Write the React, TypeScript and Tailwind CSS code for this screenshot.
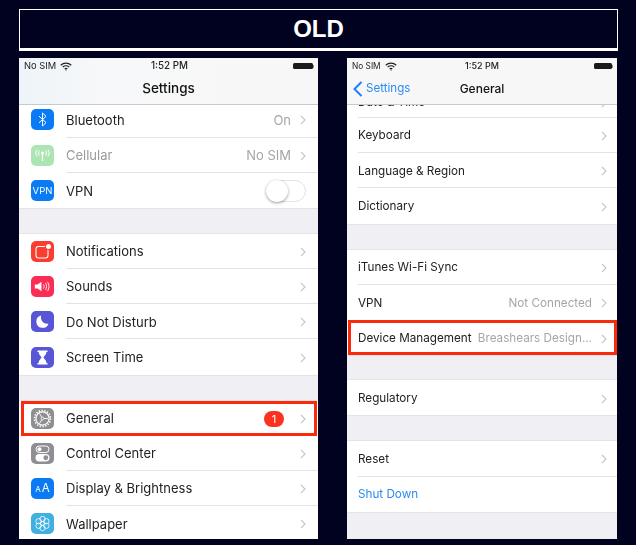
import type { ReactNode } from 'react';

const sans = { fontFamily: 'Inter, "Liberation Sans", sans-serif' };

function Chevron() {
  return (
    <svg width="6" height="10" viewBox="0 0 6 10" className="shrink-0" fill="none">
      <path d="M1 .8 5 5 1 9.2" stroke="#c4c4c8" strokeWidth="1.1" />
    </svg>
  );
}

function Wifi() {
  return (
    <svg width="12" height="9" viewBox="0 0 13 9" fill="none" stroke="#222">
      <path d="M.8 3.2C4 .2 9 .2 12.2 3.2" strokeWidth="1.3" />
      <path d="M2.9 5.2c2-1.8 5.2-1.800 7.200 0" strokeWidth="1.3" />
      <path d="M5 7.100c.9-.7 2.100-.7 3 0" strokeWidth="1.3" />
      <circle cx="6.500" cy="8.200" r=".7" fill="#222" stroke="none" />
    </svg>
  );
}

function StatusBar({ compact }: { compact?: boolean }) {
  return (
    <div className="relative flex items-center justify-between h-[15px] pt-[1px] text-[#222]">
      <div className={`flex items-center gap-[4px] pl-[5px] ${compact ? 'text-[8.300px]' : 'text-[9.300px]'}`}>
        <span>No SIM</span>
        <Wifi />
      </div>
      <span className={`absolute inset-x-0 text-center font-medium ${compact ? 'text-[9px]' : 'text-[9.800px] pl-[2px]'}`}>1:52 PM</span>
      <div className="flex items-center pr-[4px]">
        <div className={`${compact ? 'w-[18px]' : 'w-[20px]'} h-[6.500px] rounded-[1.500px] bg-[#1a1a1a]`} />
        <div className="w-[1px] h-[3px] bg-[#888]" />
      </div>
    </div>
  );
}

function IconBox({ bg, children }: { bg: string; children: ReactNode }) {
  return (
    <div className={`${bg} w-[23px] h-[21px] rounded-[5px] shrink-0 flex items-center justify-center overflow-hidden`}>
      {children}
    </div>
  );
}

const icons: Record<string, ReactNode> = {
  bluetooth: (
    <IconBox bg="bg-[#0a7bf5]">
      <svg width="9" height="15" viewBox="0 0 9 15" fill="none" stroke="#fff" strokeWidth="1">
        <path d="M1 4.200 8 10.600 4.500 14V1L8 4.400 1 10.800" />
      </svg>
    </IconBox>
  ),
  cellular: (
    <IconBox bg="bg-[#ace5b3]">
      <svg width="17" height="13" viewBox="0 0 17 13" fill="none" stroke="#fff" strokeWidth="1">
        <circle cx="8.500" cy="4" r="1.500" fill="#fff" stroke="none" />
        <path d="M8.500 5v7" strokeWidth="1.200" />
        <path d="M5.500 1.500c-1.200 1.400-1.200 3.600 0 5M11.500 1.500c1.200 1.400 1.200 3.600 0 5M3.200.5c-1.800 2-1.800 5 0 7M13.800.5c1.800 2 1.800 5 0 7" />
      </svg>
    </IconBox>
  ),
  vpn: (
    <IconBox bg="bg-[#0a7bf5]">
      <span className="text-[9.500px] leading-none text-white">VPN</span>
    </IconBox>
  ),
  notifications: (
    <IconBox bg="bg-[#fb3c30]">
      <svg width="21" height="19" viewBox="0 0 21 19" fill="none">
        <rect x="4" y="4.500" width="12" height="11.500" rx="2.500" stroke="#fff" strokeWidth="1.100" />
        <circle cx="16.500" cy="4.500" r="3.500" fill="#fb3c30" />
        <circle cx="16.500" cy="4.500" r="2.500" fill="#fff" />
      </svg>
    </IconBox>
  ),
  sounds: (
    <IconBox bg="bg-[#fb2d55]">
      <svg width="17" height="11" viewBox="0 0 17 11" fill="none">
        <path d="M.8 3.500h2.700L7.500.8v9.400L3.500 7.500H.8z" fill="#fff" />
        <path d="M9.500 3.500c.8 1.200.8 2.800 0 4M11.500 2c1.400 2 1.400 5 0 7M13.500.8c2 2.800 2 6.600 0 9.400" stroke="#fff" strokeWidth=".9" />
      </svg>
    </IconBox>
  ),
  dnd: (
    <IconBox bg="bg-[#5856d6]">
      <svg width="13" height="13" viewBox="0 0 13 13">
        <path d="M5.200.6A6.200 6.200 0 1 0 12.500 8.400C8.500 9.600 3.900 6 5.200.6z" fill="#fff" />
      </svg>
    </IconBox>
  ),
  screenTime: (
    <IconBox bg="bg-[#5856d6]">
      <svg width="11" height="15" viewBox="0 0 11 15">
        <path d="M.5.500h10v1.600H9.400C9.400 5 7 6 6.500 7.500 7 9 9.400 10 9.400 12.900h1.100v1.600H.5v-1.600h1.100C1.600 10 4 9 4.500 7.500 4 6 1.600 5 1.600 2.100H.5z" fill="#fff" />
      </svg>
    </IconBox>
  ),
  general: (
    <IconBox bg="bg-[#8e8e93]">
      <svg width="19" height="19" viewBox="0 0 19 19" fill="none" stroke="#fff">
        <circle cx="9.500" cy="9.500" r="8" strokeWidth="1.600" strokeDasharray="1.400 1.400" />
        <circle cx="9.500" cy="9.500" r="6.600" strokeWidth="1.200" />
        <path d="M9.500 9.500 6.500 4.500M9.500 9.500h5.500M9.500 9.500l-3 5" strokeWidth=".9" />
        <circle cx="9.500" cy="9.500" r="1.400" fill="#8e8e93" strokeWidth=".8" />
      </svg>
    </IconBox>
  ),
  control: (
    <IconBox bg="bg-[#8e8e93]">
      <svg width="15" height="17" viewBox="0 0 15 17" fill="none">
        <rect x="1" y="1" width="13" height="6.500" rx="3.250" stroke="#fff" />
        <circle cx="4.500" cy="4.250" r="2" fill="#fff" />
        <rect x=".5" y="9" width="14" height="7.500" rx="3.750" fill="#fff" />
        <circle cx="10.800" cy="12.750" r="2.400" fill="#8e8e93" />
      </svg>
    </IconBox>
  ),
  display: (
    <IconBox bg="bg-[#0a7bf5]">
      <span className="flex items-baseline gap-[1px] text-white leading-none">
        <span className="text-[8px]">A</span>
        <span className="text-[11.500px]">A</span>
      </span>
    </IconBox>
  ),
  wallpaper: (
    <IconBox bg="bg-[#3fb0e0]">
      <svg width="17" height="17" viewBox="0 0 17 17" fill="none" stroke="#fff" strokeWidth=".8">
        <circle cx="8.500" cy="8.500" r="2" />
        <circle cx="8.500" cy="4" r="2.700" />
        <circle cx="8.500" cy="13" r="2.700" />
        <circle cx="4.600" cy="6.250" r="2.700" />
        <circle cx="12.400" cy="6.250" r="2.700" />
        <circle cx="4.600" cy="10.750" r="2.700" />
        <circle cx="12.400" cy="10.750" r="2.700" />
      </svg>
    </IconBox>
  ),
};

type RowProps = {
  label: string;
  value?: string;
  icon?: string;
  dim?: boolean;
  blue?: boolean;
  badge?: string;
  toggle?: boolean;
  last?: boolean;
  noChevron?: boolean;
  marked?: string;
};

function Row({ label, value, icon, dim, blue, badge, toggle, last, noChevron, marked }: RowProps) {
  return (
    <div className={`relative flex items-center bg-white h-[35.200px] ${icon ? 'pl-[12px]' : 'pl-[11px]'}`}>
      {icon && <div className="mr-[12px]">{icons[icon]}</div>}
      <div className={`flex flex-1 min-w-0 items-center h-full pt-[2px] ${icon ? 'pr-[12px]' : 'pr-[10px]'} ${last ? '' : 'border-b border-[#e3e3e6]'}`}>
        <span className={`whitespace-nowrap ${dim ? 'text-[#9b9b9f]' : blue ? 'text-[#2a8cf0]' : 'text-[#222]'}`}>{label}</span>
        <div className="flex-1" />
        {value && <span className="whitespace-nowrap text-[#a6a6aa] mr-[9px]">{value}</span>}
        {badge && (
          <span className="w-[20px] h-[16px] mr-[16px] rounded-full bg-[#fb3220] text-white text-[11px] flex items-center justify-center">
            {badge}
          </span>
        )}
        {toggle && (
          <div className="w-[40px] h-[22px] rounded-full bg-white border border-[#e4e4e6] relative">
            <div className="absolute -left-[1px] -top-[1px] w-[22px] h-[22px] rounded-full bg-white shadow-[0_1px_3px_rgba(0,0,0,0.4)]" />
          </div>
        )}
        {!toggle && !noChevron && <Chevron />}
      </div>
      {marked && <div className={`absolute inset-y-0 ${marked} border-[3px] border-[#fb2a0c] pointer-events-none`} />}
    </div>
  );
}

function Gap({ h }: { h: string }) {
  return <div className={`${h} bg-[#efeff4] border-y border-[#e4e4e8]`} />;
}

function SettingsPhone() {
  return (
    <div className="w-[299px] h-[481px] overflow-hidden bg-[#efeff4] shrink-0 text-[13px] blur-[0.3px]">
      <div className="h-[47px] bg-[linear-gradient(90deg,#eef4f9,#f7f8f9_30%,#f7f7f7)] border-b border-[#c9c9cc]">
        <StatusBar />
        <div className="text-center text-[13.500px] font-medium text-[#111] leading-[29px] pt-[1px]">Settings</div>
      </div>
      {/* list is scrolled a little, so the first row runs under the nav bar */}
      <div className="h-[32.500px] overflow-hidden">
        <div className="-mt-[2.700px]">
          <Row label="Bluetooth" value="On" icon="bluetooth" />
        </div>
      </div>
      <Row label="Cellular" value="No SIM" icon="cellular" dim />
      <Row label="VPN" icon="vpn" toggle last />
      <Gap h="h-[26px]" />
      <Row label="Notifications" icon="notifications" />
      <Row label="Sounds" icon="sounds" />
      <Row label="Do Not Disturb" icon="dnd" />
      <Row label="Screen Time" icon="screenTime" last />
      <Gap h="h-[26px]" />
      <Row label="General" icon="general" badge="1" marked="inset-x-[1.500px]" last />
      <Row label="Control Center" icon="control" />
      <Row label="Display & Brightness" icon="display" />
      <Row label="Wallpaper" icon="wallpaper" />
    </div>
  );
}

function GeneralPhone() {
  return (
    <div className="w-[270px] h-[481px] overflow-hidden bg-[#efeff4] shrink-0 text-[11.700px] blur-[0.3px]">
      <div className="h-[47px] bg-[#f7f7f7] border-b border-[#c9c9cc]">
        <StatusBar compact />
        <div className="relative text-center text-[12px] font-medium text-[#111] leading-[29px] pt-[1px]">
          <div className="absolute left-[6px] top-[1px] h-[29px] flex items-center gap-[3px] text-[#2a8cf0] font-normal text-[11.600px]">
            <svg width="10" height="16" viewBox="0 0 10 16" fill="none">
              <path d="M8.500 1 1.500 8l7 7" stroke="#1a82fb" strokeWidth="2" />
            </svg>
            <span>Settings</span>
          </div>
          General
        </div>
      </div>
      {/* same here: only the foot of "Date & Time" shows below the nav bar */}
      <div className="h-[12px] overflow-hidden">
        <div className="-mt-[20.500px]">
          <Row label="Date & Time" last />
        </div>
      </div>
      <div className="h-[1px] bg-white pl-[11px]">
        <div className="h-full bg-[#e3e3e6]" />
      </div>
      <Row label="Keyboard" />
      <Row label="Language & Region" />
      <Row label="Dictionary" last />
      <Gap h="h-[26px]" />
      <Row label="iTunes Wi-Fi Sync" />
      <Row label="VPN" value="Not Connected" last />
      <Row label="Device Management" value="Breashears Design..." marked="inset-x-[0.500px]" last />
      <Gap h="h-[25px]" />
      <Row label="Regulatory" last />
      <Gap h="h-[26px]" />
      <Row label="Reset" />
      <Row label="Shut Down" blue noChevron last />
      <Gap h="h-[28px]" />
    </div>
  );
}

export default function App() {
  return (
    <div className="w-[636px] h-[545px] overflow-hidden bg-[#00021f] pt-[9px] pl-[19px]" style={sans}>
      <div className="w-[599px] h-[42px] border border-b-[3px] border-white flex items-center justify-center text-white text-[24px] font-bold font-['Liberation_Sans',sans-serif]">
        OLD
      </div>
      <div className="flex gap-[29px] mt-[7px]">
        <SettingsPhone />
        <GeneralPhone />
      </div>
    </div>
  );
}
